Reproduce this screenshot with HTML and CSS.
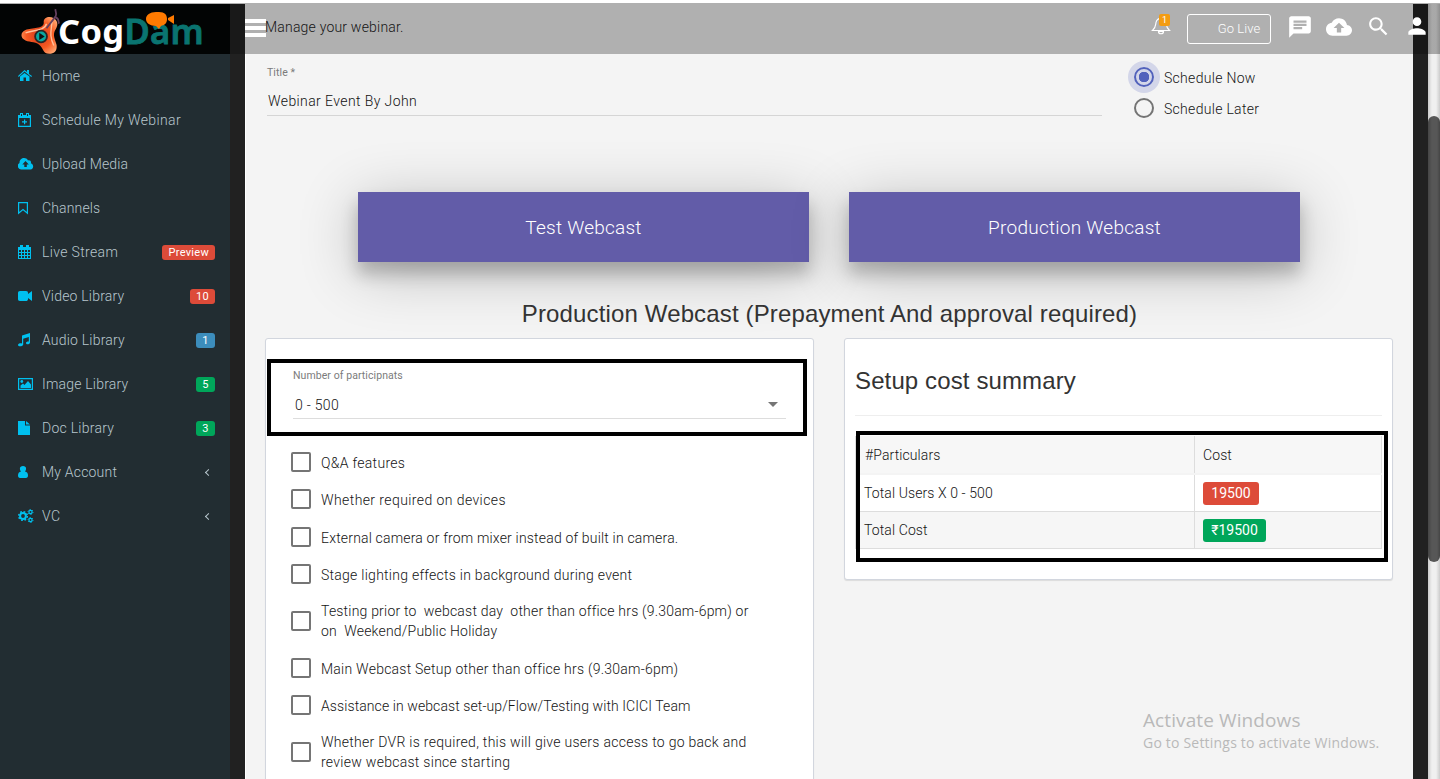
FILE: index.html
```
<!DOCTYPE html>
<html lang="en">
<head>
<meta charset="utf-8">
<title>CogDam - Manage your webinar</title>
<link rel="stylesheet" href="styles.css">
</head>
<body>
<div class="app">
  <header class="topbar">
    <div class="logo">
      <svg class="logo-mark" width="45" height="50" viewBox="0 0 45 50">
        <defs><radialGradient id="lg" cx="50%" cy="50%" r="60%"><stop offset="0" stop-color="#d5371b"/><stop offset=".6" stop-color="#f65a22"/><stop offset="1" stop-color="#ffa36d"/></radialGradient></defs>
        <path d="M25 16C24 10 31 8 36 11C42 15 40 20 37 25C35 30 37 34 39 40C40 46 37 50 31 50C24 50 25 44 20 40C15 36 8 38 3 34C-1 31 0 26 5 24C12 21 25 23 25 16Z" fill="url(#lg)"/>
        <path d="M5 27C13 24 26 25 28 17M34 15C33 26 31 30 36 41" fill="none" stroke="#ffc09b" stroke-width="1.5"/>
        <circle cx="22" cy="31" r="6.500" fill="#08a8a0" stroke="#2b2524" stroke-width="2"/>
        <path d="M20 27l6 4-6 4z" fill="#111"/>
        <path d="M28 22L38 9C40 5 37 4 38 1M38 10C43 12 40 15 42 17" fill="none" stroke="#65405f" stroke-width="2"/>
      </svg>
      <span class="logo-text"><span class="cog">Cog</span><span class="dam">Dam</span></span>
      <svg class="logo-cam" width="29" height="18" viewBox="0 0 29 18"><path d="M10 0h3c6 0 8 3 8 7 0 5-3 6-6 7l-2 3-3-3C4 14 0 11 0 7S4 0 10 0zM28 3v9l-6-4V6z" fill="#ff7a00"/></svg>
    </div>
    <button class="menu" aria-label="Menu"><span></span><span></span><span></span></button>
    <span class="page-name">Manage your webinar.</span>
    <div class="actions">
      <div class="bell">
        <svg width="20" height="20" viewBox="0 0 20 20" fill="none" stroke="#fff" stroke-width="1.2"><path d="M10 1v2M1.500 15.500C5 12.500 4.500 10 5 7.500C5.500 5 7.500 3.300 10 3.300S14.500 5 15 7.500C15.500 10 15 12.500 18.500 15.500zM7.500 16.500c0 3 5 3 5 0z"/></svg>
        <span class="bell-count">1</span>
      </div>
      <button class="go-live">Go Live</button>
      <svg class="i-chat" width="26" height="26" viewBox="0 0 24 24" fill="#fff"><path d="M20 2H4c-1.100 0-2 .9-2 2v18l4-4h14c1.100 0 2-.9 2-2V4c0-1.100-.9-2-2-2zM6 9h12v2H6V9zm8 5H6v-2h8v2zm4-6H6V6h12v2z"/></svg>
      <svg class="i-cloud" width="26" height="26" viewBox="0 0 24 24" fill="#fff"><path d="M19.350 10.040C18.670 6.590 15.640 4 12 4 9.110 4 6.600 5.640 5.350 8.040 2.340 8.360 0 10.910 0 14c0 3.310 2.690 6 6 6h13c2.760 0 5-2.240 5-5 0-2.640-2.050-4.780-4.650-4.960zM14 13v4h-4v-4H7l5-5 5 5h-3z"/></svg>
      <svg class="i-search" width="25" height="25" viewBox="0 0 24 24" fill="#fff"><path d="M15.500 14h-.79l-.28-.27C15.410 12.590 16 11.110 16 9.500 16 5.910 13.090 3 9.500 3S3 5.910 3 9.500 5.910 16 9.500 16c1.610 0 3.090-.59 4.230-1.570l.27.28v.79l5 4.990L20.490 19l-4.990-5zm-6 0C7.010 14 5 11.990 5 9.500S7.010 5 9.500 5 14 7.010 14 9.500 11.990 14 9.500 14z"/></svg>
      <svg class="i-user" width="26" height="26" viewBox="0 0 24 24" fill="#fff"><path d="M12 12c2.210 0 4-1.790 4-4s-1.790-4-4-4-4 1.790-4 4 1.790 4 4 4zm0 2c-2.670 0-8 1.340-8 4v2h16v-2c0-2.660-5.330-4-8-4z"/></svg>
    </div>
  </header>

  <div class="body">
    <nav class="sidebar">
      <a class="nav"><svg width="16" height="16" viewBox="0 0 16 16"><path d="M0 8l6.500-6 2.500 2V2h2v4l3 2-.7 1L6.500 3.500.7 9zM2 8.500L6.500 5 11.500 8.500V13H8V9.500H5.500V13H2z"/></svg><span class="n1">Home</span></a>
      <a class="nav"><svg width="16" height="16" viewBox="0 0 16 16"><path fill-rule="evenodd" d="M0 3h2V1h3v2h3V1h3v2h2v12H0zM1.200 6v7.800h10.600V6zM3 2v2h1V2zm6 0v2h1V2zM6 7.500h1.200v1.800H9v1.200H7.200v1.800H6v-1.800H4V9.300h2z"/></svg><span class="n2">Schedule My Webinar</span></a>
      <a class="nav"><svg width="16" height="16" viewBox="0 0 16 16"><path fill-rule="evenodd" d="M3 13.500A3.500 3.500 0 0 1 1.500 7C1.500 1.500 8 .5 10 4.500c2-.8 3.600 1 2.800 2.800C16 8 16 13.500 12.500 13.500zM7.500 5L4.300 8.500h2V11h2.500V8.500h2z"/></svg><span class="n3">Upload Media</span></a>
      <a class="nav"><svg width="16" height="16" viewBox="0 0 16 16"><path fill="none" stroke="#00c0ef" stroke-width="1.200" d="M.6 2.600h8.800v10.600L5 9.500.6 13.200z"/></svg><span class="n4">Channels</span></a>
      <a class="nav"><svg width="16" height="16" viewBox="0 0 16 16"><path fill-rule="evenodd" d="M0 3h2V1h3v2h3V1h3v2h2v12H0zM1 6v2h2V6zm3 0v2h2V6zm3 0v2h2V6zm3 0v2h2V6zM1 9v2h2V9zm3 0v2h2V9zm3 0v2h2V9zm3 0v2h2V9zM1 12v2h2v-2zm3 0v2h2v-2zm3 0v2h2v-2zm3 0v2h2v-2z"/></svg><span class="n5">Live Stream</span><b class="tag red">Preview</b></a>
      <a class="nav"><svg width="16" height="16" viewBox="0 0 16 16"><path d="M2 3h6c1.500 0 2 .8 2 2v1l4-3v10l-4-3v1c0 1.500-1 2-2 2H2c-1.500 0-2-1-2-2V5c0-1.300.7-2 2-2z"/></svg><span class="n6">Video Library</span><b class="tag red">10</b></a>
      <a class="nav"><svg width="16" height="16" viewBox="0 0 16 16"><path d="M4 3.500L12 1v9.500c0 2-4 2.500-4 .5 0-1.200 1.500-1.700 2.800-1.500V5L5.200 6.700v5.800C5.200 14.500 0 15 0 13c0-1.200 2-2 4-1.500z"/></svg><span class="n7">Audio Library</span><b class="tag blue">1</b></a>
      <a class="nav"><svg width="16" height="16" viewBox="0 0 16 16"><path fill-rule="evenodd" d="M0 2h15v12H0zM1.200 3.200v9.600h12.600V3.200zM2.500 12V9.500L5 7.500l1.500 1.500L10 5l3 3.500V12z"/><circle cx="3.800" cy="5.500" r="1.400"/></svg><span class="n8">Image Library</span><b class="tag green">5</b></a>
      <a class="nav"><svg width="16" height="16" viewBox="0 0 16 16"><path d="M0 1h7v4.500h5V15H0zM8 1l4 3.500H8z"/></svg><span class="n9">Doc Library</span><b class="tag green">3</b></a>
      <a class="nav"><svg width="16" height="16" viewBox="0 0 16 16"><path d="M5 2c4 0 3.500 4 2 5.500C9 8 10 9 10 11.500c0 1.500-.7 2.500-2 2.500H2c-1.300 0-2-1-2-2.500C0 9 1 8 3 7.500 1.500 6 1 2 5 2z"/></svg><span class="n10">My Account</span><i class="caret"></i></a>
      <a class="nav"><svg width="16" height="16" viewBox="0 0 16 16" fill="none" stroke="#00c0ef"><g fill="none"><circle cx="5" cy="8" r="2.900" stroke-width="2"/><circle cx="5" cy="8" r="4.300" stroke-width="1.600" stroke-dasharray="1.700 1.680"/><circle cx="12.500" cy="4" r="1.600" stroke-width="1.200"/><circle cx="12.500" cy="4" r="2.500" stroke-dasharray="1.200 1.420"/><circle cx="12.500" cy="12" r="1.600" stroke-width="1.200"/><circle cx="12.500" cy="12" r="2.500" stroke-dasharray="1.200 1.420"/></g></svg><span class="n11">VC</span><i class="caret"></i></a>
    </nav>

    <main class="content">
      <section class="event">
        <div class="field title-field">
          <label class="small-label">Title *</label>
          <div class="value">Webinar Event By John</div>
        </div>
        <div class="radios">
          <div class="radio on"><i></i><span>Schedule Now</span></div>
          <div class="radio"><i></i><span>Schedule Later</span></div>
        </div>
      </section>
      <div class="modes">
        <button class="mode">Test Webcast</button>
        <button class="mode">Production Webcast</button>
      </div>
      <h3 class="heading">Production Webcast (Prepayment And approval required)</h3>
      <div class="columns">
        <section class="card options">
          <div class="participants">
            <label class="small-label">Number of participnats</label>
            <div class="select"><span>0 - 500</span><i></i></div>
          </div>
          <div class="checks">
            <div class="check"><i></i><span class="c1">Q&amp;A features</span></div>
            <div class="check"><i></i><span class="c2">Whether required on devices</span></div>
            <div class="check"><i></i><span class="c3">External camera or from mixer instead of built in camera.</span></div>
            <div class="check"><i></i><span class="c4">Stage lighting effects in background during event</span></div>
            <div class="check two"><i></i><span class="c5">Testing prior to&nbsp; webcast day&nbsp; other than office hrs (9.30am-6pm) or<br>on&nbsp; Weekend/Public Holiday</span></div>
            <div class="check"><i></i><span class="c6">Main Webcast Setup other than office hrs (9.30am-6pm)</span></div>
            <div class="check"><i></i><span class="c7">Assistance in webcast set-up/Flow/Testing with ICICI Team</span></div>
            <div class="check two"><i></i><span class="c8">Whether DVR is required, this will give users access to go back and<br>review webcast since starting</span></div>
          </div>
        </section>
        <section class="card summary">
          <h3>Setup cost summary</h3>
          <div class="cost-table">
            <div class="row head"><span>#Particulars</span><span>Cost</span></div>
            <div class="row"><span>Total Users X 0 - 500</span><span><b class="price red">19500</b></span></div>
            <div class="row alt"><span>Total Cost</span><span><b class="price rupee green">₹19500</b></span></div>
            <div class="outline"></div>
          </div>
        </section>
      </div>
    </main>
  </div>
  <div class="scroll"><div class="thumb"></div></div>
  <div class="watermark"><p class="w1">Activate Windows</p><p class="w2">Go to Settings to activate Windows.</p></div>
</div>
</body>
</html>
```

FILE: styles.css
```
* { box-sizing: border-box; }
body { margin: 0; background: #fff; overflow: hidden; color: #141414; font: 300 14px/20px Roboto, "Liberation Sans", sans-serif; letter-spacing: .3px; }
button { margin: 0; padding: 0; border: 0; background: none; font: inherit; letter-spacing: inherit; color: inherit; }
i { display: block; font-style: normal; }
b { font-weight: 400; }
h3, p { margin: 0; font-weight: 400; }
.app { position: relative; height: 779px; padding-top: 3px; display: flex; flex-direction: column; overflow: hidden; }
.topbar { flex: none; height: 51px; border-top: 1px solid #b0b0b0; display: flex; align-items: center; background: linear-gradient(90deg, #191919 245px, #b0b0b0 245px, #b0b0b0 1413px, #181818 1413px, #181818 1428px, #b3b3b3 1428px); }
.logo { position: relative; width: 230px; height: 50px; margin-right: 15px; padding-left: 21px; background: #020404; display: flex; }
.logo-mark { flex: none; margin-top: 4px; height: 46px; width: 41px; }
.logo-text { margin-left: -4px; padding-top: 7px; font: 700 34.500px/40px "Noto Sans", sans-serif; letter-spacing: .3px; white-space: nowrap; }
.cog { color: #fff; }
.dam { color: #0a7470; font-weight: 600; -webkit-text-stroke: .8px #0a7470; }
.logo-cam { position: absolute; left: 146px; top: 8px; }
.menu { width: 21px; height: 18px; display: flex; flex-direction: column; justify-content: space-between; margin-top: -2px; }
.menu span { height: 4px; background: #fff; }
.page-name { margin: -5px 0 0 -1px; letter-spacing: .2px; }
.actions { margin-left: auto; padding-right: 20px; display: flex; align-items: center; height: 50px; color: #fff; }
.bell { position: relative; width: 20px; height: 20px; margin-right: 16px; margin-top: -8px; }
.bell svg { display: block; }
.bell-count { position: absolute; left: 8px; top: -1px; width: 11px; height: 12px; border-radius: 2px; background: #f39c12; font-size: 9px; font-weight: 400; line-height: 12px; text-align: center; letter-spacing: 0; }
.go-live { width: 84px; height: 30px; border: 1px solid #fff; border-radius: 3px; padding-left: 20px; color: #fff; font-size: 13px; letter-spacing: .1px; }
.i-chat { margin: -4px 0 0 16px; }
.i-cloud { margin: -5px 0 0 13px; }
.i-search { margin: -5px 0 0 14px; }
.i-user { position: relative; z-index: 1; margin: -6px -10px 0 13px; }

.body { flex: 1; min-height: 0; display: flex; width: 1428px; background: #212121; }
.sidebar { width: 230px; background: #222d32; color: #b8c7ce; }
.nav { height: 44px; display: flex; align-items: center; padding: 0 15px 0 18px; letter-spacing: .35px; }
.nav svg { width: 16px; height: 16px; margin-right: 8px; fill: #00c0ef; flex: none; }
.n1, .n10 { letter-spacing: .2px; }
.n3, .n4 { letter-spacing: .15px; }
.n6, .n7, .n8 { letter-spacing: .2px; }
.n9 { letter-spacing: .25px; }
.tag { margin-left: auto; min-width: 19px; height: 15px; padding: 0 6px; border-radius: 3px; color: #fff; font-size: 11px; line-height: 15px; text-align: center; font-weight: 400; letter-spacing: .3px; }
.red { background: #dd4b39; }
.blue { background: #3c8dbc; }
.green { background: #00a65a; }
.caret { margin: 1px 4px 0 auto; width: 5px; height: 5px; border: solid #b8c7ce; border-width: 0 0 1.300px 1.300px; transform: rotate(45deg); }
.content { margin-left: 15px; width: 1168px; background: #f4f4f4; border-left: 1px solid #fff; padding: 0 20px 0 19px; overflow: hidden; }
.event { height: 138px; display: flex; padding-left: 2px; }
.title-field { width: 835px; height: 62px; padding-top: 9px; border-bottom: 1px solid #d5d5d5; }
.small-label { display: block; font-size: 10.500px; font-weight: 400; color: #7b7b7b; letter-spacing: .08px; }
.value { margin: 8px 0 0 1px; color: #111; letter-spacing: .4px; }
.radios { padding: 8px 0 0 32px; display: flex; flex-direction: column; gap: 1px; }
.radio { height: 30px; display: flex; align-items: center; gap: 10px; }
.radio i { width: 20px; height: 20px; border: 2px solid #747474; border-radius: 50%; }
.radio.on i { border-color: #5262bc; background: radial-gradient(circle, #5262bc 5px, #d3d6e9 5.500px); box-shadow: 0 0 0 6px #d3d6e9; }
.radio span { padding-top: 2px; }
.modes { display: flex; gap: 40px; padding-left: 93px; height: 107px; }
.mode { width: 451px; height: 70px; padding-top: 1px; background: #625ca8; color: #fff; font-size: 19px; line-height: 69px; letter-spacing: .25px; box-shadow: 0 12px 16px rgba(0,0,0,.22), 0 10px 60px rgba(0,0,0,.24); }
.heading { height: 39px; padding-left: 1px; text-align: center; font: 24px/30px "Liberation Sans", Arial, sans-serif; color: #333; letter-spacing: .14px; }
.columns { display: flex; gap: 30px; align-items: flex-start; }
.card { width: 549px; border: 1px solid #d2d6de; border-radius: 3px; background: #fff; box-shadow: 0 1px 1px rgba(0,0,0,.1); }
.options { padding: 20px 1px; height: 460px; }
.participants { width: 540px; height: 77px; border: 4px solid #000; padding: 3px 17px 0 22px; }
.select { height: 33px; padding: 9px 8px 0 2px; border-bottom: 1px solid #ddd; display: flex; justify-content: space-between; }
.select i { width: 0; height: 0; margin-top: 7px; border: 5px solid transparent; border-top-color: #757575; border-bottom: 0; }
.checks { padding: 7px 0 0 24px; white-space: nowrap; }
.check { display: flex; align-items: center; gap: 10px; height: 37.500px; }
.check.two { height: 56px; }
.check i { flex: none; width: 20px; height: 20px; border: 2px solid #757575; border-radius: 2px; }
.check span { position: relative; top: 1px; }
.check.two span { top: 0; }
.c2 { letter-spacing: .41px; }
.c3 { letter-spacing: .18px; }
.c4 { letter-spacing: .26px; }
.c5 { letter-spacing: .2px; }
.c6 { letter-spacing: .24px; }
.c7 { letter-spacing: .09px; }
.c8 { letter-spacing: .28px; }
.summary { height: 242px; padding: 27px 10px 0; }
.summary h3 { height: 50px; border-bottom: 1px solid #eee; font: 24px/30px "Liberation Sans", Arial, sans-serif; color: #333; letter-spacing: .12px; }
.cost-table { position: relative; margin-top: 20px; border-left: 1px solid #ddd; letter-spacing: .1px; }
.row { height: 37px; display: flex; border-bottom: 1px solid #ddd; }
.row > span { flex: 1; border-right: 1px solid #ddd; padding: 7px 8px; line-height: 22px; }
.row > span:first-child { flex: 0 0 339px; }
.head { height: 39px; border-bottom: 2px solid #f4f4f4; background: #f7f7f7; }
.head > span { padding-top: 8px; }
.head > span:first-child { padding-left: 9px; }
.alt { background: #f6f6f6; }
.price { display: block; width: 56px; height: 23px; line-height: 23px; border-radius: 3px; color: #fff; text-align: center; letter-spacing: 0; }
.rupee { width: 63px; }
.outline { position: absolute; left: 0; top: -5px; width: 532px; height: 131px; border: 4px solid #000; }
.scroll { position: absolute; right: 0; top: 4px; bottom: 0; width: 12px; padding-top: 112px; background: linear-gradient(90deg, rgba(0,0,0,.2), rgba(0,0,0,.06) 4px, rgba(0,0,0,.06) 8px, rgba(0,0,0,.2)); }
.thumb { height: 446px; border-radius: 6px; background: linear-gradient(90deg, #454545, #575757 4px, #575757 9px, #454545); }
.watermark { position: absolute; left: 1143px; top: 707px; color: #b9b9b9; font-family: "Open Sans", "Noto Sans", sans-serif; font-weight: 400; letter-spacing: .1px; white-space: nowrap; }
.w1 { font-size: 19px; line-height: 26px; }
.w2 { font-size: 14px; line-height: 20px; letter-spacing: .2px; }
```
